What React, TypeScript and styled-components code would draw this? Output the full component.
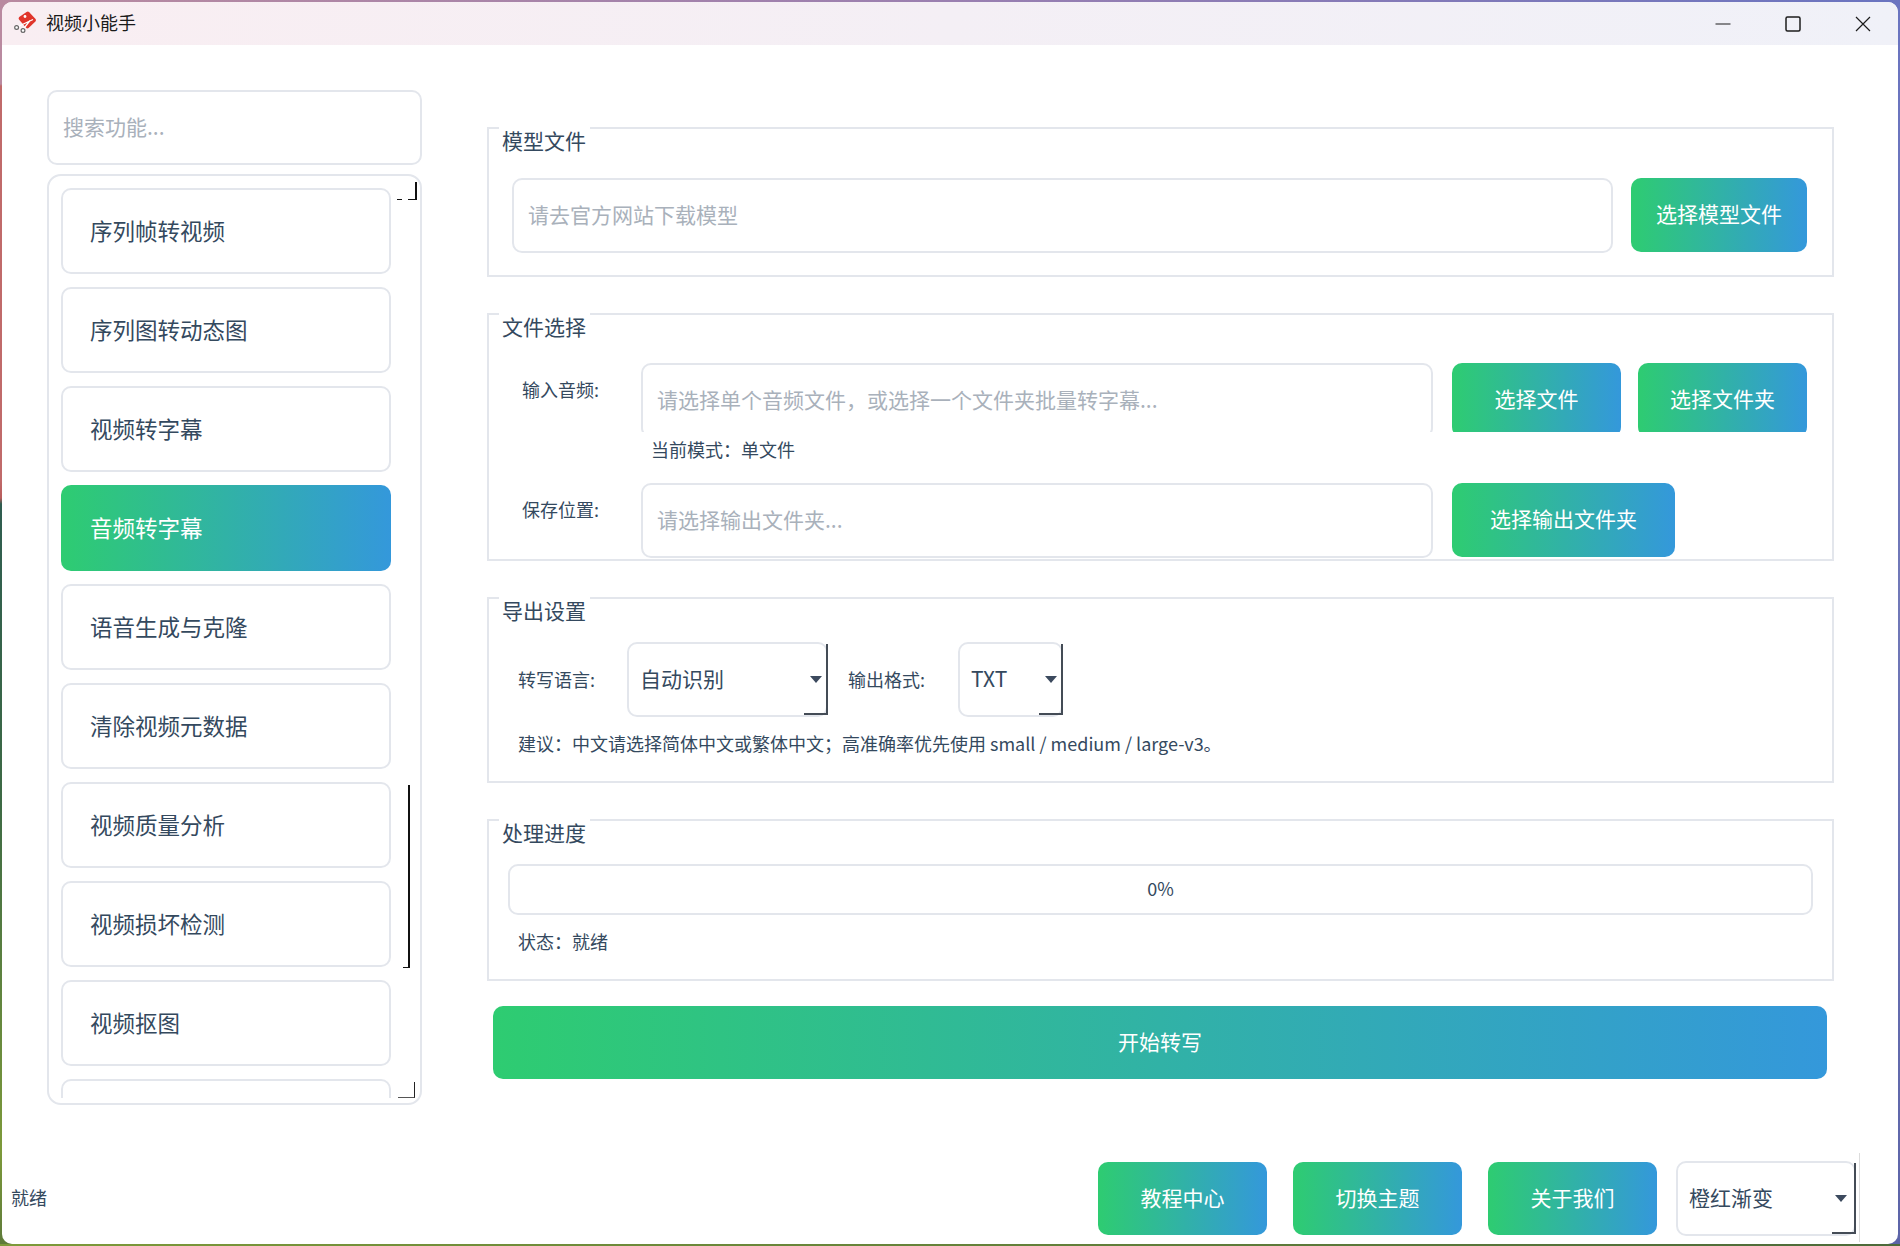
import React from "react";
import styled, { createGlobalStyle } from "styled-components";

const GlobalStyle = createGlobalStyle`
  html, body {
    margin: 0;
    padding: 0;
  }
  body {
    width: 1900px;
    height: 1246px;
    overflow: hidden;
    font-family: "Noto Sans CJK SC", "Noto Sans", sans-serif;
    background:
      linear-gradient(180deg, #b98aa0 0, #b98aa0 84px, #c06a6a 86px, #c06a6a 480px, #b85c5c 498px, #2f5d50 504px, #3d6a45 800px, #7d9a3a 1150px, #5d7a3a 1246px) left / 50% 100% no-repeat,
      linear-gradient(180deg, #6a74c0 0, #7078b8 600px, #5c64a8 1246px) right / 50% 100% no-repeat;
  }
`;

const accent = "linear-gradient(90deg, #2ecc71, #3498db)";
const line = "#e3e6ec";
const ink = "#34495e";

const TopEdge = styled.div`
  position: fixed;
  top: 0;
  left: 0;
  width: 1900px;
  height: 2px;
  background: linear-gradient(90deg, #b98aa0, #9a7fb0 50%, #6a74c0);
`;

const BottomEdge = styled.div`
  position: fixed;
  bottom: 0;
  left: 0;
  width: 1900px;
  height: 2px;
  background: linear-gradient(90deg, #7d9a3a, #4c6a3a);
`;

const Window = styled.div`
  position: relative;
  margin: 2px;
  width: 1896px;
  height: 1242px;
  display: flex;
  flex-direction: column;
  background: #fff;
  border-radius: 10px;
  overflow: hidden;
`;

const TitleBar = styled.header`
  height: 43px;
  flex: none;
  display: flex;
  align-items: center;
  background: linear-gradient(90deg, #f9eef2, #f4eff5 50%, #f0f1f8);
`;

const TitleText = styled.span`
  margin-left: 8px;
  padding-bottom: 4px;
  font-size: 18px;
  color: #1a1a1a;
`;

const Logo = styled.svg`
  margin-left: 12px;
  margin-bottom: 2px;
  width: 24px;
  height: 24px;
`;

const WindowControls = styled.div`
  margin-left: auto;
  display: flex;
`;

const ControlButton = styled.button`
  width: 70px;
  height: 43px;
  padding: 0;
  border: 0;
  background: none;
  display: flex;
  align-items: center;
  justify-content: center;
  svg {
    width: 16px;
    height: 16px;
    stroke: #1c1c1c;
    stroke-width: 1.2;
    fill: none;
  }
`;

const Body = styled.div`
  flex: 1;
  display: flex;
  align-items: flex-start;
`;

const Sidebar = styled.aside`
  width: 375px;
  margin: 45px 0 0 45px;
  display: flex;
  flex-direction: column;
  gap: 9px;
`;

const Field = styled.input`
  box-sizing: border-box;
  display: block;
  width: 100%;
  height: 75px;
  padding: 0 14px 4px;
  border: 2px solid ${line};
  border-radius: 10px;
  outline: none;
  background: #fff;
  font: inherit;
  font-size: 21px;
  color: ${ink};
  &::placeholder {
    color: #a9b1bb;
    opacity: 1;
  }
`;

const FeatureList = styled.nav`
  position: relative;
  box-sizing: border-box;
  height: 931px;
  padding: 12px 0 5px 12px;
  border: 2px solid ${line};
  border-radius: 14px;
`;

const FeatureViewport = styled.div`
  height: 910px;
  overflow: hidden;
`;

const FeatureItem = styled.div<{ $active?: boolean }>`
  box-sizing: border-box;
  width: 330px;
  height: 86px;
  margin-bottom: 13px;
  padding: 0 0 3px 27px;
  display: flex;
  align-items: center;
  border: 2px solid ${(p) => (p.$active ? "transparent" : line)};
  border-radius: 10px;
  background: ${(p) => (p.$active ? `${accent} border-box` : "#fff")};
  font-size: 22.5px;
  color: ${(p) => (p.$active ? "#fff" : ink)};
`;

const ScrollCapTop = styled.i`
  position: absolute;
  left: 359px;
  top: 6px;
  width: 7px;
  height: 17px;
  border-right: 2px solid #111;
  border-bottom: 1px solid #111;
  &::before {
    content: "";
    position: absolute;
    left: -11px;
    bottom: -1px;
    width: 5px;
    height: 1px;
    background: #111;
  }
`;

const ScrollThumb = styled.i`
  position: absolute;
  left: 354px;
  top: 609px;
  width: 5px;
  height: 183px;
  border-right: 2px solid #111;
  &::after {
    content: "";
    position: absolute;
    left: 0;
    bottom: 0;
    width: 5px;
    height: 1px;
    background: #111;
  }
`;

const ScrollCapBottom = styled.i`
  position: absolute;
  left: 349px;
  top: 906px;
  width: 16px;
  height: 15px;
  border-right: 1.5px solid #222;
  border-bottom: 1px solid #555;
`;

const Main = styled.main`
  width: 1347px;
  margin: 82px 0 0 65px;
  display: flex;
  flex-direction: column;
`;

const Group = styled.section<{ $height: number; $gap: number }>`
  position: relative;
  box-sizing: border-box;
  height: ${(p) => p.$height}px;
  margin-bottom: ${(p) => p.$gap}px;
  border: 2px solid ${line};
`;

const Legend = styled.h2`
  position: absolute;
  top: -2px;
  left: 10px;
  margin: 0;
  padding: 0 4px 0 3px;
  background: #fff;
  font-size: 21px;
  font-weight: 400;
  line-height: 26px;
  color: ${ink};
`;

const GroupBody = styled.div<{ $top: number; $left: number; $right: number }>`
  box-sizing: border-box;
  height: 100%;
  padding: ${(p) => `${p.$top}px ${p.$right}px 0 ${p.$left}px`};
`;

const Row = styled.div<{ $clip?: number }>`
  display: flex;
  align-items: flex-start;
  height: ${(p) => (p.$clip ? `${p.$clip}px` : "auto")};
  overflow: ${(p) => (p.$clip ? "hidden" : "visible")};
`;

const RowLabel = styled.label`
  width: 152px;
  flex: none;
  padding-left: 33px;
  box-sizing: border-box;
  font-size: 18px;
  line-height: 26px;
  color: ${ink};
  margin-top: 13px;
`;

const InputSlot = styled.div<{ $width: number; $margin: number }>`
  width: ${(p) => p.$width}px;
  flex: none;
  margin-right: ${(p) => p.$margin}px;
`;

const AccentButton = styled.button<{ $width: number; $height?: number }>`
  box-sizing: border-box;
  width: ${(p) => p.$width}px;
  height: ${(p) => p.$height ?? 74}px;
  flex: none;
  padding: 0 0 4px;
  border: 0;
  border-radius: 10px;
  background: ${accent};
  font: inherit;
  font-size: 21px;
  color: #fff;
`;

const ModeNote = styled.div`
  margin: 4px 0 21px 162px;
  height: 26px;
  font-size: 18px;
  line-height: 26px;
  color: ${ink};
`;

const InlineLabel = styled.span<{ $width: number; $indent?: number }>`
  box-sizing: border-box;
  width: ${(p) => p.$width}px;
  padding-left: ${(p) => p.$indent ?? 0}px;
  margin-bottom: 2px;
  flex: none;
  font-size: 18px;
  line-height: 26px;
  color: ${ink};
`;

const SettingsRow = styled.div`
  display: flex;
  align-items: center;
  height: 75px;
`;

const Dropdown = styled.div<{ $width: number }>`
  position: relative;
  box-sizing: border-box;
  width: ${(p) => p.$width}px;
  height: 75px;
  flex: none;
  display: flex;
  align-items: center;
  padding: 0 0 4px 11px;
  background: #fff;
  border: 2px solid ${line};
  border-radius: 10px;
  font-size: 21px;
  color: ${ink};
  &::before {
    content: "";
    position: absolute;
    right: -2px;
    top: 0;
    bottom: 0;
    width: 22px;
    border-right: 2px solid #444c56;
    border-bottom: 2px solid #444c56;
  }
  &::after {
    content: "";
    position: absolute;
    right: 4px;
    top: 32px;
    border-left: 6px solid transparent;
    border-right: 6px solid transparent;
    border-top: 7px solid #3c4a5e;
  }
`;

const Hint = styled.p`
  margin: 13px 0 0;
  font-size: 18px;
  line-height: 26px;
  color: ${ink};
`;

const ProgressTrack = styled.div`
  box-sizing: border-box;
  width: 1305px;
  height: 51px;
  padding-bottom: 4px;
  display: flex;
  align-items: center;
  justify-content: center;
  border: 2px solid ${line};
  border-radius: 10px;
  font-size: 18px;
  color: ${ink};
`;

const StatusLine = styled.p`
  margin: 13px 0 0 10px;
  font-size: 18px;
  line-height: 26px;
  color: ${ink};
`;

const StartButton = styled(AccentButton)`
  margin: 0 6px;
  height: 73px;
`;

const Footer = styled.footer`
  position: relative;
  height: 75px;
  flex: none;
  margin-bottom: 8px;
  display: flex;
  align-items: center;
  padding-left: 9px;
`;

const FooterStatus = styled.span`
  font-size: 18px;
  padding-bottom: 4px;
  color: ${ink};
  margin-right: 1051px;
`;

const FooterActions = styled.div`
  display: flex;
  align-items: center;
  gap: 26px;
`;

const ThemeDropdown = styled(Dropdown)`
  margin-left: 19px;
  &::after {
    right: 7px;
  }
`;

const FooterDivider = styled.i`
  position: absolute;
  left: 1857px;
  top: -8px;
  width: 1px;
  height: 89px;
  background: #dcdcdc;
`;

const features = [
  "序列帧转视频",
  "序列图转动态图",
  "视频转字幕",
  "音频转字幕",
  "语音生成与克隆",
  "清除视频元数据",
  "视频质量分析",
  "视频损坏检测",
  "视频抠图",
  "",
];

const App = () => {
  return (
    <>
      <GlobalStyle />
      <TopEdge />
      <BottomEdge />
      <Window>
        <TitleBar>
          <Logo viewBox="0 0 24 24">
            <path d="M12.5 1Q14 0 15.2 1.2L21.6 8Q22.6 9.4 21.4 10.6L14.6 17Q13.2 18 12 16.8L5 8.6Q4 7.2 5.2 6Z" fill="#e0352b" />
            <circle cx="11" cy="5.5" r="1.4" fill="#fff" />
            <path d="M3 16 19 8.5M9 18.5 16 9.5" stroke="#fff" strokeWidth="1.3" />
            <circle cx="2.6" cy="16.5" r="1.9" fill="#fff" stroke="#666" strokeWidth="1.2" />
            <circle cx="9" cy="19.5" r="1.9" fill="#fff" stroke="#666" strokeWidth="1.2" />
          </Logo>
          <TitleText>视频小能手</TitleText>
          <WindowControls>
            <ControlButton aria-label="minimize">
              <svg viewBox="0 0 16 16">
                <path d="M0.5 8h15" />
              </svg>
            </ControlButton>
            <ControlButton aria-label="maximize">
              <svg viewBox="0 0 16 16">
                <rect x="1" y="1" width="14" height="14" rx="1.5" strokeWidth="1.5" />
              </svg>
            </ControlButton>
            <ControlButton aria-label="close">
              <svg viewBox="0 0 16 16">
                <path d="M1 1l14 14M15 1L1 15" />
              </svg>
            </ControlButton>
          </WindowControls>
        </TitleBar>

        <Body>
          <Sidebar>
            <Field placeholder="搜索功能..." />
            <FeatureList>
              <FeatureViewport>
                {features.map((name, i) => (
                  <FeatureItem key={i} $active={name === "音频转字幕"}>
                    {name}
                  </FeatureItem>
                ))}
              </FeatureViewport>
              <ScrollCapTop />
              <ScrollThumb />
              <ScrollCapBottom />
            </FeatureList>
          </Sidebar>

          <Main>
            <Group $height={150} $gap={36}>
              <Legend>模型文件</Legend>
              <GroupBody $top={49} $left={23} $right={24}>
                <Row>
                  <InputSlot $width={1101} $margin={18}>
                    <Field placeholder="请去官方网站下载模型" />
                  </InputSlot>
                  <AccentButton $width={176}>选择模型文件</AccentButton>
                </Row>
              </GroupBody>
            </Group>

            <Group $height={248} $gap={36}>
              <Legend>文件选择</Legend>
              <GroupBody $top={48} $left={0} $right={0}>
                <Row $clip={69}>
                  <RowLabel>输入音频:</RowLabel>
                  <InputSlot $width={792} $margin={19}>
                    <Field placeholder="请选择单个音频文件，或选择一个文件夹批量转字幕..." />
                  </InputSlot>
                  <AccentButton $width={169}>选择文件</AccentButton>
                  <InputSlot $width={0} $margin={17} />
                  <AccentButton $width={169}>选择文件夹</AccentButton>
                </Row>
                <ModeNote>当前模式：单文件</ModeNote>
                <Row>
                  <RowLabel>保存位置:</RowLabel>
                  <InputSlot $width={792} $margin={19}>
                    <Field placeholder="请选择输出文件夹..." />
                  </InputSlot>
                  <AccentButton $width={223}>选择输出文件夹</AccentButton>
                </Row>
              </GroupBody>
            </Group>

            <Group $height={186} $gap={36}>
              <Legend>导出设置</Legend>
              <GroupBody $top={43} $left={29} $right={0}>
                <SettingsRow>
                  <InlineLabel $width={109}>转写语言:</InlineLabel>
                  <Dropdown $width={201}>自动识别</Dropdown>
                  <InlineLabel $width={130} $indent={20}>输出格式:</InlineLabel>
                  <Dropdown $width={105}>TXT</Dropdown>
                </SettingsRow>
                <Hint>建议：中文请选择简体中文或繁体中文；高准确率优先使用 small / medium / large-v3。</Hint>
              </GroupBody>
            </Group>

            <Group $height={162} $gap={25}>
              <Legend>处理进度</Legend>
              <GroupBody $top={43} $left={19} $right={0}>
                <ProgressTrack>0%</ProgressTrack>
                <StatusLine>状态：就绪</StatusLine>
              </GroupBody>
            </Group>

            <StartButton $width={1334}>开始转写</StartButton>
          </Main>
        </Body>

        <Footer>
          <FooterStatus>就绪</FooterStatus>
          <FooterActions>
            <AccentButton $width={169} $height={73}>教程中心</AccentButton>
            <AccentButton $width={169} $height={73}>切换主题</AccentButton>
            <AccentButton $width={169} $height={73}>关于我们</AccentButton>
          </FooterActions>
          <ThemeDropdown $width={180}>橙红渐变</ThemeDropdown>
          <FooterDivider />
        </Footer>
      </Window>
    </>
  );
};

export default App;
